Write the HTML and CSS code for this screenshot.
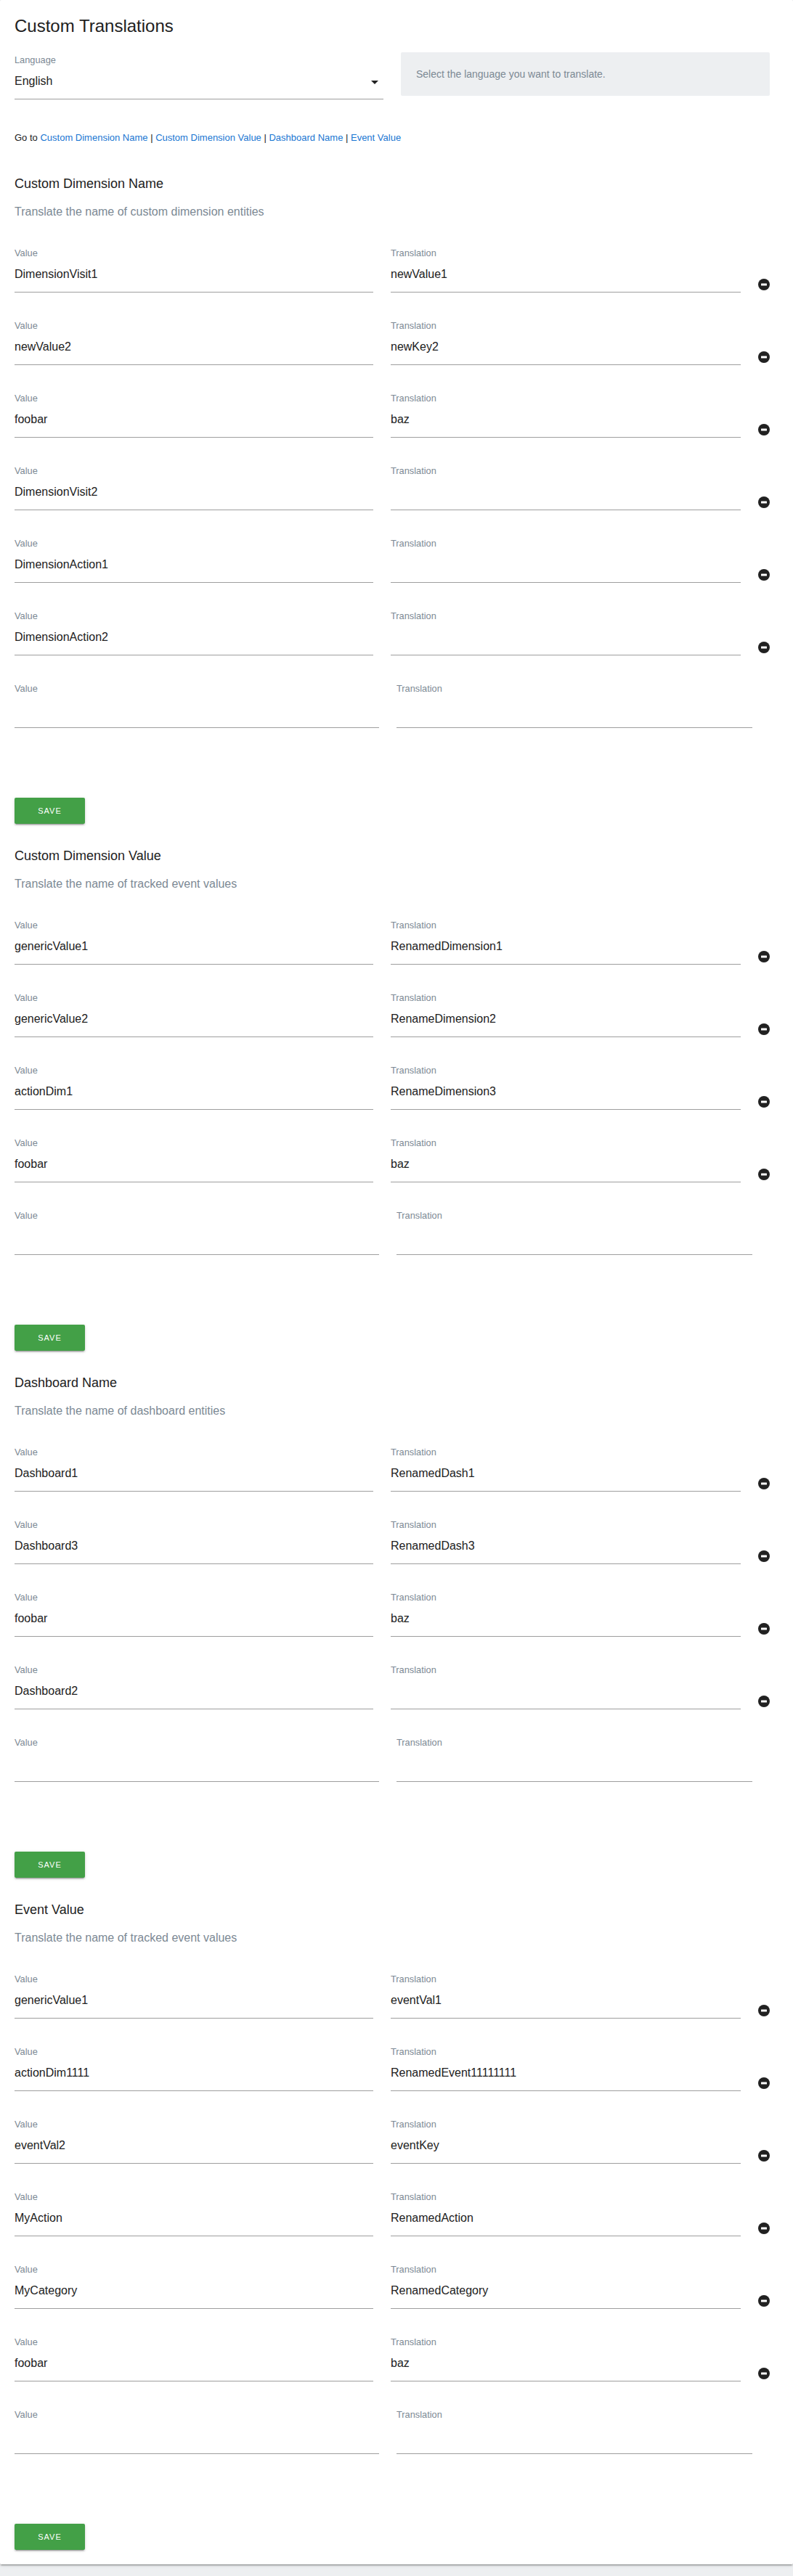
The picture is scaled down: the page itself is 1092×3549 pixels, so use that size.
FILE: index.html
```html
<!DOCTYPE html>
<html lang="en">
<head>
<meta charset="utf-8">
<title>Custom Translations</title>
<link rel="stylesheet" href="styles.css">
</head>
<body>
<main class="card">
  <h1 class="title">Custom Translations</h1>
  <div class="language">
    <div class="field">
      <span class="label">Language</span>
      <div class="input select">English<svg class="caret" width="10" height="5" viewBox="0 0 10 5"><path d="M0 0h10L5 5z"/></svg></div>
    </div>
    <p class="help">Select the language you want to translate.</p>
  </div>
  <p class="goto">Go to <a href="#dimension-name">Custom Dimension Name</a> | <a href="#dimension-value">Custom Dimension Value</a> | <a href="#dashboard-name">Dashboard Name</a> | <a href="#event-value">Event Value</a></p>
  <div id="sections"></div>
</main>
<script src="app.js"></script>
</body>
</html>
```
FILE: styles.css
```css
* { box-sizing: border-box; }
body {
  margin: 0;
  height: 3549px;
  background: #edeff1;
  color: #212121;
  font-family: "Liberation Sans", Arial, sans-serif;
}
.card {
  height: 3533px;
  padding: 20px;
  background: #fff;
  border-radius: 2px;
  box-shadow: 0 2px 2px 0 rgba(0,0,0,.14), 0 1px 5px 0 rgba(0,0,0,.12), 0 3px 1px -2px rgba(0,0,0,.2);
}
h1, h2, p { margin: 0; font-weight: 400; }
.title { font-size: 24px; line-height: 32px; }
.language {
  display: grid;
  grid-template-columns: 1fr 1fr;
  gap: 24px;
  width: 1040px;
  margin-top: 20px;
  align-items: start;
}
.label { display: block; height: 24px; padding-top: 3px; font-size: 12.8px; line-height: 16px; color: #7c8994; }
.input { height: 41px; border-bottom: 1px solid #9e9e9e; font-size: 16px; line-height: 32px; }
.select { display: flex; justify-content: space-between; }
.caret { margin: 15px 7px 0 0; fill: #212121; }
.help {
  height: 60px;
  padding: 0 21px;
  border-radius: 2px;
  background: #edeff1;
  color: #7c8994;
  font-size: 14px;
  line-height: 60px;
}
.goto { margin-top: 43px; font-size: 13px; line-height: 20px; }
.goto a { color: #1976d2; text-decoration: none; }
.section { padding-top: 41px; }
.section + .section { padding-top: 32px; }
.heading { font-size: 18px; line-height: 24px; }
.description { margin-top: 15px; font-size: 16px; line-height: 24px; color: #7c8994; }
.rows { margin-top: 34px; }
.row {
  display: grid;
  grid-template-columns: 494px 482px 16px;
  gap: 24px;
  height: 100px;
  align-items: start;
}
.row.blank { grid-template-columns: 502px 490px; }
.remove { margin-top: 46px; }
.save {
  display: block;
  width: 97px;
  height: 36px;
  margin-top: 61px;
  padding: 0;
  border: 0;
  border-radius: 2px;
  background: #43a047;
  color: #fff;
  font: 11px/36px "Liberation Sans", Arial, sans-serif;
  letter-spacing: 1px;
  text-align: center;
  box-shadow: 0 2px 2px 0 rgba(0,0,0,.14), 0 1px 5px 0 rgba(0,0,0,.12), 0 3px 1px -2px rgba(0,0,0,.2);
}
```
FILE: app.js
```js
const sections = [
  ['dimension-name', 'Custom Dimension Name', 'Translate the name of custom dimension entities', [
    ['DimensionVisit1', 'newValue1'], ['newValue2', 'newKey2'], ['foobar', 'baz'],
    ['DimensionVisit2', ''], ['DimensionAction1', ''], ['DimensionAction2', '']]],
  ['dimension-value', 'Custom Dimension Value', 'Translate the name of tracked event values', [
    ['genericValue1', 'RenamedDimension1'], ['genericValue2', 'RenameDimension2'],
    ['actionDim1', 'RenameDimension3'], ['foobar', 'baz']]],
  ['dashboard-name', 'Dashboard Name', 'Translate the name of dashboard entities', [
    ['Dashboard1', 'RenamedDash1'], ['Dashboard3', 'RenamedDash3'], ['foobar', 'baz'], ['Dashboard2', '']]],
  ['event-value', 'Event Value', 'Translate the name of tracked event values', [
    ['genericValue1', 'eventVal1'], ['actionDim1111', 'RenamedEvent11111111'], ['eventVal2', 'eventKey'],
    ['MyAction', 'RenamedAction'], ['MyCategory', 'RenamedCategory'], ['foobar', 'baz']]]
];

const field = (label, value) =>
  `<div class="field"><span class="label">${label}</span><div class="input">${value}</div></div>`;

const removeIcon = '<svg class="remove" width="16" height="16" viewBox="0 0 16 16"><circle cx="8" cy="8" r="8" fill="#212121"/><rect x="4" y="6.5" width="8" height="3" rx=".5" fill="#fff"/></svg>';

const row = ([value, translation]) =>
  `<div class="row">${field('Value', value)}${field('Translation', translation)}${removeIcon}</div>`;

document.getElementById('sections').innerHTML = sections.map(([id, name, description, rows]) => `
  <section class="section" id="${id}">
    <h2 class="heading">${name}</h2>
    <p class="description">${description}</p>
    <div class="rows">${rows.map(row).join('')}
      <div class="row blank">${field('Value', '')}${field('Translation', '')}</div>
    </div>
    <button class="save" type="button">SAVE</button>
  </section>`).join('');
```
